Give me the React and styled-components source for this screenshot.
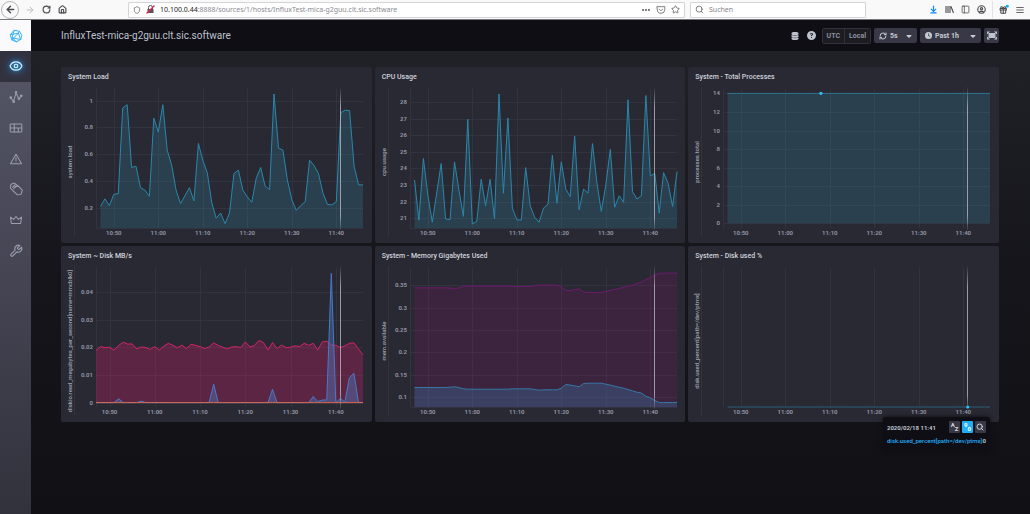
import React, { useLayoutEffect, useRef, useState } from "react";
import styled, { createGlobalStyle } from "styled-components";
import {
  LuArrowLeft, LuArrowRight, LuRotateCw, LuHouse, LuShield, LuEllipsis, LuStar, LuSearch,
  LuPanelLeft, LuMenu, LuArrowDownToLine, LuCircleUser, LuGift, LuRefreshCw, LuEye, LuWrench,
} from "react-icons/lu";
import { FaDatabase, FaCircleQuestion, FaClock, FaCaretDown } from "react-icons/fa6";

const GlobalStyle = createGlobalStyle`
  * { box-sizing: border-box; }
  body {
    margin: 0;
    background: #0f0e15;
    font-family: Roboto, "Liberation Sans", sans-serif;
  }
  button { font-family: inherit; margin: 0; padding: 0; border: 0; cursor: pointer; }
`;

const Screen = styled.div`
  min-height: 100vh;
  display: flex;
  flex-direction: column;
`;

/* ---------- browser bar ---------- */

const BrowserBar = styled.header`
  display: grid;
  grid-template-columns: 128px minmax(0, 562px) minmax(0, 181px) 1fr;
  align-items: center;
  height: 20px;
  background: #f9f9fa;
  border-bottom: 1px solid #77777c;
  color: #55555a;
`;

const BarButtons = styled.div`
  display: flex;
  align-items: center;
  gap: 6px;
  justify-content: ${(p) => (p.$end ? "flex-end" : "flex-start")};
  padding: 0 ${(p) => (p.$end ? 5 : 1)}px;
`;

const BarButton = styled.button`
  display: flex;
  align-items: center;
  justify-content: center;
  width: ${(p) => (p.$round ? 18 : 10)}px;
  height: ${(p) => (p.$round ? 18 : 14)}px;
  border: ${(p) => (p.$round ? "1px solid #b5b5b9" : "0")};
  border-radius: 50%;
  background: transparent;
  color: ${(p) => p.$color || "#4a4a4f"};
`;

const Divider = styled.span`
  width: 1px;
  height: 17px;
  background: #e3e3e6;
`;

const Field = styled.div`
  display: flex;
  align-items: center;
  gap: 5px;
  height: 16px;
  margin-right: 5px;
  padding: 0 4px;
  background: #fff;
  border: 1px solid #d4d4d7;
  border-radius: 1px;
`;

const Address = styled.div`
  flex: 1;
  min-width: 0;
  overflow: hidden;
  white-space: nowrap;
  font: 7px "Noto Sans", sans-serif;
  color: #8b8b90;
  b { font-weight: 400; color: #1c1c20; }
`;

const SearchInput = styled.input`
  flex: 1;
  min-width: 0;
  padding: 0;
  border: 0;
  outline: 0;
  background: transparent;
  font: 7px "Noto Sans", sans-serif;
  &::placeholder { color: #85858a; }
`;

/* ---------- app frame ---------- */

const Body = styled.div`
  flex: 1;
  display: flex;
`;

const Sidebar = styled.nav`
  width: 31px;
  flex: none;
  background: linear-gradient(#565868, #464655 48%, #32323d);
`;

const Logo = styled.a`
  display: flex;
  align-items: center;
  justify-content: center;
  height: 31px;
  background: #fafafc;
`;

const NavList = styled.div`
  display: flex;
  flex-direction: column;
  height: 215px;
`;

const NavItem = styled.a`
  flex: 1;
  display: flex;
  align-items: center;
  justify-content: center;
  color: ${(p) => (p.$active ? "#d8f4ff" : "#999dab")};
  background: ${(p) => (p.$active ? "#32323e" : "transparent")};
  svg { filter: ${(p) => (p.$active ? "drop-shadow(0 0 2px #22adf6) drop-shadow(0 0 4px #326bba)" : "none")}; }
`;

const Main = styled.main`
  flex: 1;
  min-width: 0;
  background: linear-gradient(#222229, #15151b 50%, #101015);
`;

const PageHeader = styled.div`
  display: flex;
  align-items: center;
  justify-content: space-between;
  height: 31px;
  padding: 0 31px 0 30px;
  background: #0f0e15;
`;

const PageTitle = styled.h1`
  margin: 0;
  font-size: 10px;
  font-weight: 400;
  color: #bec2cc;
`;

const Controls = styled.div`
  display: flex;
  align-items: center;
  gap: 3px;
  color: #bec2cc;
`;

const IconButton = styled.button`
  display: flex;
  align-items: center;
  justify-content: center;
  width: ${(p) => (p.$filled ? 15 : 14)}px;
  height: 15px;
  color: #bec2cc;
  background: ${(p) => (p.$filled ? "#383846" : "transparent")};
  border-radius: 2px;
`;

const Toggle = styled.div`
  display: flex;
  height: 16px;
  border: 1px solid #31313d;
  border-radius: 2px;
`;

const ToggleButton = styled.button`
  padding: 0 4px;
  background: #1c1c21;
  color: #8e91a1;
  font-size: 7px;
  font-weight: 700;
  & + & { border-left: 1px solid #31313d; }
`;

const Dropdown = styled.button`
  display: flex;
  align-items: center;
  gap: 3px;
  width: ${(p) => p.$width}px;
  height: 15px;
  padding: 0 4px 0 5px;
  border-radius: 2px;
  background: #383846;
  color: #c6cad3;
  font-size: 7px;
  font-weight: 700;
  svg:last-child { margin-left: auto; }
`;

const Dashboard = styled.div`
  display: grid;
  grid-template-columns: repeat(3, minmax(0, 1fr));
  gap: 3px;
  padding: 16px 31px 60px 30px;
`;

/* ---------- cells ---------- */

const Cell = styled.section`
  position: relative;
  background: #292933;
  border-radius: 2px;
`;

const CellTitle = styled.h2`
  margin: 0;
  padding: 5px 7px 0;
  height: 19px;
  font-size: 7px;
  line-height: 10px;
  font-weight: 500;
  color: #d0d3dc;
`;

const Plot = styled.svg`
  display: block;
  width: 100%;
  height: 157px;
  text {
    font-size: 6px;
    font-weight: 700;
    fill: #8e91a1;
  }
`;

const AxisLabel = styled.text`
  && { font-weight: 500; fill: #a0a3b2; }
`;

const Legend = styled.div`
  position: absolute;
  top: 171px;
  right: 9px;
  z-index: 1;
  width: 107px;
  padding: 4px;
  border-radius: 2px;
  background: #0f0e15;
  box-shadow: 0 0 5px #0f0e15;
  font-size: 6px;
  font-weight: 700;
  color: #bec2cc;
`;

const LegendTop = styled.div`
  display: flex;
  align-items: center;
  gap: 2px;
  height: 12px;
  time { flex: 1; font-size: 6px; white-space: nowrap; }
`;

const LegendButton = styled.button`
  display: flex;
  align-items: center;
  justify-content: center;
  width: 11px;
  height: 12px;
  border-radius: 1px;
  background: ${(p) => (p.$active ? "#22adf6" : "#383846")};
  color: ${(p) => (p.$active ? "#fff" : "#d4d7dd")};
  sub, sup { padding: 1px 0; font-size: 6px; font-weight: 700; line-height: 6px; }
  sup { align-self: flex-start; }
  sub { align-self: flex-end; }
`;

const LegendRow = styled.div`
  display: flex;
  justify-content: space-between;
  height: 13px;
  line-height: 16px;
  span { font-weight: 500; color: #22adf6; }
`;

/* ---------- data, one point per minute ---------- */

const load = [
  .21, .265, .215, .3, .305, .945, .97, .5, .51, .35, .33, .285, .87, .765, .97,
  .63, .52, .33, .23, .29, .35, .25, .68, .555, .46, .24, .12, .16, .08, .16,
  .455, .48, .33, .28, .24, .42, .5, .36, .335, 1.05, .645, .63, .41, .26, .18,
  .215, .245, .555, .515, .455, .31, .225, .22, .245, .91, .93, .925, .51, .37, .37,
];

const cpu = [
  23.3, 20.87, 24.6, 22.4, 20.75, 22.5, 24.3, 20.95, 20.9, 24.4, 22.7, 21.1, 26.97, 20.65, 20.8,
  23.35, 21.75, 23.35, 20.95, 28.5, 22.5, 27.05, 21.6, 20.9, 20.87, 24.05, 21.75, 21.05, 20.75, 21.6,
  21.85, 24.8, 21.9, 24.4, 22.75, 22.3, 25.95, 21.5, 22.75, 22.5, 25.5, 23.15, 21.4, 23, 25.15,
  21.65, 22.35, 21.95, 28.15, 22.6, 22.15, 22.35, 28.4, 23.55, 23.7, 21.3, 23.75, 23.1, 21.7, 23.8,
];

// disk numbers are kept in KB/s
const diskWrite = [
  18.8, 20.2, 19.8, 20, 18.9, 20.6, 21.8, 21.1, 21.2, 19.4, 20.1, 19.9, 19.2, 20.2, 19,
  20.4, 21.4, 20.7, 19.8, 20.8, 19.5, 21, 20.7, 20.2, 19.5, 20.1, 21.6, 20.6, 20, 19.4,
  20.1, 20.2, 19.9, 21.9, 20.1, 20.6, 22.4, 21.7, 19, 21.7, 19.5, 20.8, 19.9, 20, 20.5,
  20.2, 21.4, 20.7, 21.4, 19, 21.9, 22.2, 20.8, 20.7, 19.9, 20.5, 21.4, 21.6, 19.3, 17.2,
];

const reads = { 5: 1.4, 10: .5, 26: 6.6, 39: 4.8, 48: 2.2, 49: .4, 50: .9, 51: 1, 52: 46.7, 54: 1.5, 55: .2, 56: 9, 57: 10.6 };
const flat = (value, count = 60) => Array(count).fill(value);
const diskRead = flat(0).map((v, i) => reads[i] || v);

const memAvailable = [
  ...flat(.3448, 8), .344, .3433, .344, .3478, ...flat(.3485, 10), ...flat(.3478, 5),
  .3493, ...flat(.3507, 5), .347, .3381, .3388, .3403, .3425, .3351, ...flat(.3343, 4),
  .3366, .3388, .341, .3433, .3455, .3485, .3507, .3545, .3575, .3634, .3672, .3731, .3769, ...flat(.3776, 4),
];

const memUsed = [
  ...flat(.1216, 8), .1224, .1231, .1216, .1187, ...flat(.1179, 10), ...flat(.1187, 5),
  .1172, .1157, ...flat(.1164, 4), .1201, .1284, .1269, .1254, .1231, .1306, ...flat(.1313, 4),
  .1291, .1269, .1246, .1224, .1201, .1172, .1142, .1112, .109, .1022, .0985, .0925, ...flat(.0881, 5),
];

const cells = [
  {
    title: "System Load", label: "system.load", start: 46, domain: [.0475, 1.0875],
    ticks: [[1, "1"], [.8, "0.8"], [.6, "0.6"], [.4, "0.4"], [.2, "0.2"]],
    series: [{ data: load, color: "#2a87ab" }],
  },
  {
    title: "CPU Usage", label: "cpu.usage", start: 46, domain: [20.4, 28.8],
    ticks: [28, 27, 26, 25, 24, 23, 22, 21].map((v) => [v, String(v)]),
    series: [{ data: cpu, color: "#2a87ab" }],
  },
  {
    title: "System - Total Processes", label: "processes.total", start: 46, domain: [-.5, 14.47],
    ticks: [14, 12, 10, 8, 6, 4, 2, 0].map((v) => [v, String(v)]),
    series: [{ data: flat(14), color: "#2f7492" }], dot: [21, 14],
  },
  {
    title: "System ~ Disk MB/s", label: "diskio.read_megabytes_per_second[name=mmcblk0]", start: 47, domain: [-1.6, 48.6],
    ticks: [[40, "0.04"], [30, "0.03"], [20, "0.02"], [10, "0.01"], [0, "0"]],
    series: [
      { data: diskWrite, color: "#cf2566", fill: "#bf1f64", opacity: .35 },
      { data: diskRead, color: "#4a78c8", fill: "#4a80c8", opacity: .4 },
      { data: flat(0), color: "#d8694f" },
    ],
  },
  {
    title: "System - Memory Gigabytes Used", label: "mem.available", start: 46, domain: [.078, .389],
    ticks: [[.35, "0.35"], [.3, "0.3"], [.25, "0.25"], [.2, "0.2"], [.15, "0.15"], [.1, "0.1"]],
    series: [
      { data: memAvailable, color: "#6f1a70", fill: "#8a1470", opacity: .2 },
      { data: memUsed, color: "#3677a5", fill: "#3c80b5", opacity: .3 },
    ],
  },
  {
    title: "System - Disk used %", label: "disk.used_percent[path=/dev/ptmx]", start: 46, domain: [0, 1],
    ticks: [], series: [{ data: flat(0), color: "#2c5f78" }], dot: [54, 0], legend: true,
  },
];

const TOP = 3;
const BOTTOM = 142;
const LEFT = 35;

const Chart = ({ title, label, start, domain, ticks, series, dot }) => {
  const ref = useRef(null);
  const [width, setWidth] = useState(311);

  useLayoutEffect(() => {
    const update = () => setWidth(Math.ceil(ref.current.getBoundingClientRect().width));
    update();
    const observer = new ResizeObserver(update);
    observer.observe(ref.current);
    return () => observer.disconnect();
  }, []);

  const right = width - 9;
  const x = (minute) => LEFT + ((minute - start) / (106 - start)) * (right - LEFT);
  const y = (v) => BOTTOM - ((v - domain[0]) / (domain[1] - domain[0])) * (BOTTOM - TOP);
  const base = y(Math.max(0, domain[0]));
  const line = (data) => data.map((v, i) => `${x(47 + i).toFixed(1)},${y(v).toFixed(1)}`).join(" ");

  return (
    <Plot ref={ref} role="img" aria-label={title}>
      <defs>
        <linearGradient id="crosshair" gradientUnits="userSpaceOnUse" x1="0" y1="0" x2="0" y2="144">
          <stop offset="0" stopColor="#b6b8c2" stopOpacity="0" />
          <stop offset=".15" stopColor="#b6b8c2" stopOpacity=".8" />
          <stop offset=".9" stopColor="#b6b8c2" stopOpacity=".8" />
          <stop offset="1" stopColor="#b6b8c2" stopOpacity=".1" />
        </linearGradient>
      </defs>
      <g fill="#33333f" shapeRendering="crispEdges">
        <rect x="13" y="1" width="1" height="149" />
        <rect x={LEFT} y={TOP} width="1" height={BOTTOM - TOP} />
        {[50, 60, 70, 80, 90, 100].map((m) => (
          <rect key={m} x={x(m)} y={TOP} width="1" height={BOTTOM - TOP} />
        ))}
        {ticks.map(([v]) => <rect key={v} x={LEFT} y={y(v)} width={right - LEFT} height="1" />)}
        {ticks.length > 0 && <rect x={LEFT} y={base} width={right - LEFT} height="1" />}
      </g>
      {series.map((s, i) => (
        <g key={i}>
          <polygon
            points={`${x(47)},${base} ${line(s.data)} ${right},${base}`}
            fill={s.fill || "#2f87a0"}
            opacity={s.opacity || .25}
          />
          <polyline points={line(s.data)} fill="none" stroke={s.color} strokeWidth="1" strokeLinejoin="round" />
        </g>
      ))}
      <rect x={Math.floor(x(101))} y="0" width="1" height="144" fill="url(#crosshair)" />
      {dot && <circle cx={x(47 + dot[0])} cy={y(dot[1])} r="1.6" fill="#31c0f6" />}
      {ticks.map(([v, text]) => (
        <text key={v} x="32" y={y(v) + 2} textAnchor="end">{text}</text>
      ))}
      {[50, 60, 70, 80, 90, 100].map((m) => (
        <text key={m} x={x(m)} y="149" textAnchor="middle">
          {m < 60 ? `10:${m}` : `11:${String(m - 60).padStart(2, "0")}`}
        </text>
      ))}
      <AxisLabel transform="translate(11 76) rotate(-90)" textAnchor="middle">{label}</AxisLabel>
    </Plot>
  );
};

/* ---------- icons ---------- */

const Icon = ({ children, size = 14 }) => (
  <svg width={size} height={size} viewBox="0 0 24 24" fill="none" stroke="currentColor"
    strokeWidth="1.8" strokeLinecap="round" strokeLinejoin="round">{children}</svg>
);

const InfluxMark = () => (
  <svg width="14" height="14" viewBox="0 0 24 24" fill="none" stroke="#22adf6" strokeWidth="1.6" strokeLinejoin="round">
    <path d="M9 2 L18 4 L22 11 L20 18 L13 22 L5 19 L2 10 Z" />
    <path d="M2 10 L16 7 L18 4 M16 7 L20 18 M16 7 L5 19 M5 15 L20 18 M9 2 L5 15 L13 22" />
  </svg>
);

const GraphIcon = () => (
  <Icon>
    <path d="M3 14 L8 19 L12 5 L17 15 L21 10" />
    <g fill="currentColor"><circle cx="3" cy="13" r="1.4" /><circle cx="8" cy="20" r="1.4" /><circle cx="12" cy="4" r="1.4" /><circle cx="17" cy="15" r="1.4" /><circle cx="21" cy="10" r="1.4" /></g>
  </Icon>
);

const DashIcon = () => (
  <Icon><rect x="2" y="5" width="20" height="14" rx="1.5" /><path d="M2 12 H22 M9 5 V19 M16 12 V19" /></Icon>
);

const AlertIcon = () => (
  <Icon><path d="M12 4 L21.5 20 H2.5 Z M12 10 V14.5 M12 17 V17.3" /></Icon>
);

const TagsIcon = () => (
  <Icon>
    <path d="M10 8 L16 7 L22 13 Q23 14 22.5 15 L21 20 Q20.500 21 19.500 21.300 L15 22 Q14 22 13.300 21.300 L8 16" />
    <path d="M8 16 L3 11 Q2 10 2.300 9 L3.300 5 Q3.600 4 4.500 3.600 L8 2 Q9 1.700 10 2.500 L16 7" />
    <path d="M6 9 L11 4.500 M8 11.500 L13 7" />
  </Icon>
);

const CrownIcon = () => (
  <Icon><path d="M4 18 L2.5 7 L8 11 L12 6 L16 11 L21.5 7 L20 18 Z" /></Icon>
);

const FullscreenIcon = () => (
  <svg width="10" height="9" viewBox="0 0 20 18" fill="currentColor">
    <rect x="3" y="4" width="14" height="10" rx="1" />
    <path d="M0 1 H6 L0 7 Z M20 1 H14 L20 7 Z M0 17 H6 L0 11 Z M20 17 H14 L20 11 Z" />
  </svg>
);

const InsecureIcon = () => (
  <svg width="9" height="9" viewBox="0 0 18 18" fill="none">
    <path d="M5 8 V5 a4 4 0 0 1 8 0 V8" stroke="#55555a" strokeWidth="2" />
    <rect x="3" y="8" width="12" height="8" fill="#55555a" />
    <path d="M1 17 L17 1" stroke="#e22850" strokeWidth="2.5" />
  </svg>
);

const LibraryIcon = () => (
  <svg width="9" height="9" viewBox="0 0 18 18" fill="none" stroke="currentColor" strokeWidth="2.2">
    <path d="M2 2 V16 M6 2 V16 M10 2 V16 M12 3 L17 16" />
  </svg>
);

const PocketIcon = () => (
  <Icon size={10}><path d="M3 4 H21 V11 A9 9 0 0 1 3 11 Z M8 10 L12 14 L16 10" /></Icon>
);

const NewsIcon = () => (
  <svg width="11" height="11" viewBox="0 0 24 24" fill="none">
    <g transform="translate(0 3) scale(.85)"><LuGift size={24} strokeWidth={3} /></g>
    <circle cx="20" cy="4" r="3.5" fill="#00b3f4" />
  </svg>
);

const App = () => {
  return (
    <Screen>
      <GlobalStyle />
      <BrowserBar>
        <BarButtons>
          <BarButton $round aria-label="Back"><LuArrowLeft size={11} strokeWidth={3} /></BarButton>
          <BarButton $color="#b5b5b9" aria-label="Forward"><LuArrowRight size={10} /></BarButton>
          <BarButton aria-label="Reload"><LuRotateCw size={9} strokeWidth={3} /></BarButton>
          <BarButton aria-label="Home"><LuHouse size={9} strokeWidth={3} /></BarButton>
        </BarButtons>
        <Field>
          <LuShield size={8} />
          <InsecureIcon />
          <Address><b>10.100.0.44</b>:8888/sources/1/hosts/InfluxTest-mica-g2guu.clt.sic.software</Address>
          <LuEllipsis size={10} strokeWidth={3} />
          <PocketIcon />
          <LuStar size={9} />
        </Field>
        <Field as="label">
          <LuSearch size={9} />
          <SearchInput aria-label="Suchen" placeholder="Suchen" />
        </Field>
        <BarButtons $end>
          <BarButton $color="#0a84ff" aria-label="Downloads"><LuArrowDownToLine size={9} strokeWidth={3} /></BarButton>
          <BarButton aria-label="Library"><LibraryIcon /></BarButton>
          <BarButton aria-label="Sidebars"><LuPanelLeft size={9} /></BarButton>
          <BarButton aria-label="Account"><LuCircleUser size={9} strokeWidth={3} /></BarButton>
          <Divider />
          <BarButton aria-label="News"><NewsIcon /></BarButton>
          <BarButton aria-label="Menu"><LuMenu size={10} /></BarButton>
        </BarButtons>
      </BrowserBar>

      <Body>
        <Sidebar>
          <Logo href="#" aria-label="Home"><InfluxMark /></Logo>
          <NavList>
            <NavItem href="#hosts" $active aria-label="Host list"><LuEye size={14} /></NavItem>
            <NavItem href="#explore" aria-label="Explore"><GraphIcon /></NavItem>
            <NavItem href="#dashboards" aria-label="Dashboards"><DashIcon /></NavItem>
            <NavItem href="#alerts" aria-label="Alerting"><AlertIcon /></NavItem>
            <NavItem href="#logs" aria-label="Log viewer"><TagsIcon /></NavItem>
            <NavItem href="#admin" aria-label="Admin"><CrownIcon /></NavItem>
            <NavItem href="#config" aria-label="Configuration"><LuWrench size={14} /></NavItem>
          </NavList>
        </Sidebar>

        <Main>
          <PageHeader>
            <PageTitle>InfluxTest-mica-g2guu.clt.sic.software</PageTitle>
            <Controls>
              <IconButton aria-label="Sources"><FaDatabase size={8} /></IconButton>
              <IconButton aria-label="Help"><FaCircleQuestion size={9} /></IconButton>
              <Toggle>
                <ToggleButton>UTC</ToggleButton>
                <ToggleButton>Local</ToggleButton>
              </Toggle>
              <Dropdown $width={43}><LuRefreshCw size={8} strokeWidth={3} />5s<FaCaretDown size={8} /></Dropdown>
              <Dropdown $width={61}><FaClock size={7} />Past 1h<FaCaretDown size={8} /></Dropdown>
              <IconButton $filled aria-label="Presentation mode"><FullscreenIcon /></IconButton>
            </Controls>
          </PageHeader>

          <Dashboard>
            {cells.map((cell) => (
              <Cell key={cell.title}>
                <CellTitle>{cell.title}</CellTitle>
                <Chart {...cell} />
                {cell.legend && (
                  <Legend>
                    <LegendTop>
                      <time>2020/02/18 11:41</time>
                      <LegendButton aria-label="Sort by name"><sup>A</sup><sub>Z</sub></LegendButton>
                      <LegendButton $active aria-label="Sort by value"><sup>9</sup><sub>0</sub></LegendButton>
                      <LegendButton aria-label="Filter"><LuSearch size={8} strokeWidth={3} /></LegendButton>
                    </LegendTop>
                    <LegendRow><span>disk.used_percent[path=/dev/ptmx]</span>0</LegendRow>
                  </Legend>
                )}
              </Cell>
            ))}
          </Dashboard>
        </Main>
      </Body>
    </Screen>
  );
};

export default App;
